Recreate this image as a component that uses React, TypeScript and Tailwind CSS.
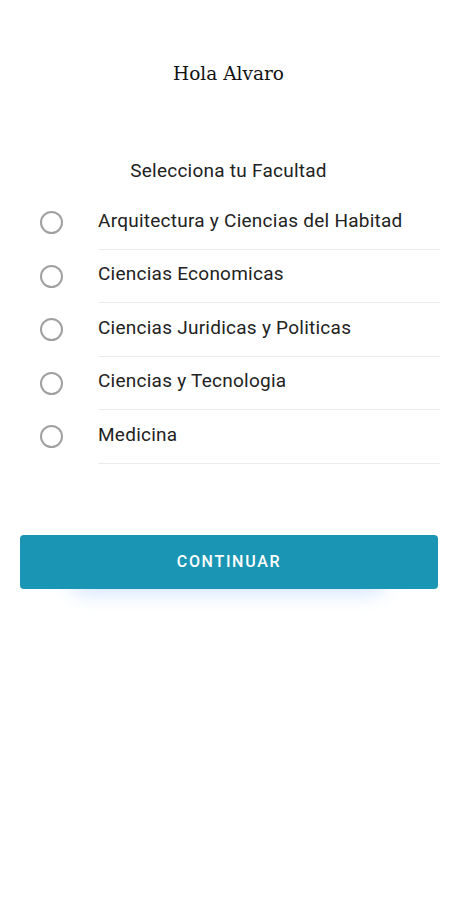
import React from "react";

const items = [
  "Arquitectura y Ciencias del Habitad",
  "Ciencias Economicas",
  "Ciencias Juridicas y Politicas",
  "Ciencias y Tecnologia",
  "Medicina",
];

export default function App() {
  return (
    <div className="w-[457px] min-h-[900px] bg-white font-['Roboto',sans-serif]">
      <div className="pt-[62px] text-center text-[18.5px] leading-[24px] text-[#111] font-['DejaVu_Serif',serif]">
        Hola Alvaro
      </div>
      <div className="mt-[74px] text-center text-[19px] leading-[22px] tracking-[0.25px] text-[#222]">
        Selecciona tu Facultad
      </div>
      <div className="mt-[14px] pr-[17px]">
        {items.map((t) => (
          <div key={t} className="flex items-stretch h-[53.5px]">
            <div className="w-[98px] flex items-center pl-[40px]">
              <div className="w-[23px] h-[23px] rounded-full border-2 border-[#a0a0a0]" />
            </div>
            <div className="flex-1 flex items-center border-b border-[#ececec] text-[19px] tracking-[0.25px] text-[#222]">
              <span className="-mt-[3px]">{t}</span>
            </div>
          </div>
        ))}
      </div>
      <div className="mt-[71px] px-[20px] pr-[19px] relative">
        <div className="absolute left-[70px] right-[72px] top-[30px] h-[28px] rounded-full bg-[#bcd8ff] blur-[10px] opacity-70" />
        <button className="relative w-full h-[54px] rounded-[4px] bg-[#1a96b4] text-white text-[16px] font-medium tracking-[1.7px]">
          CONTINUAR
        </button>
      </div>
    </div>
  );
}
